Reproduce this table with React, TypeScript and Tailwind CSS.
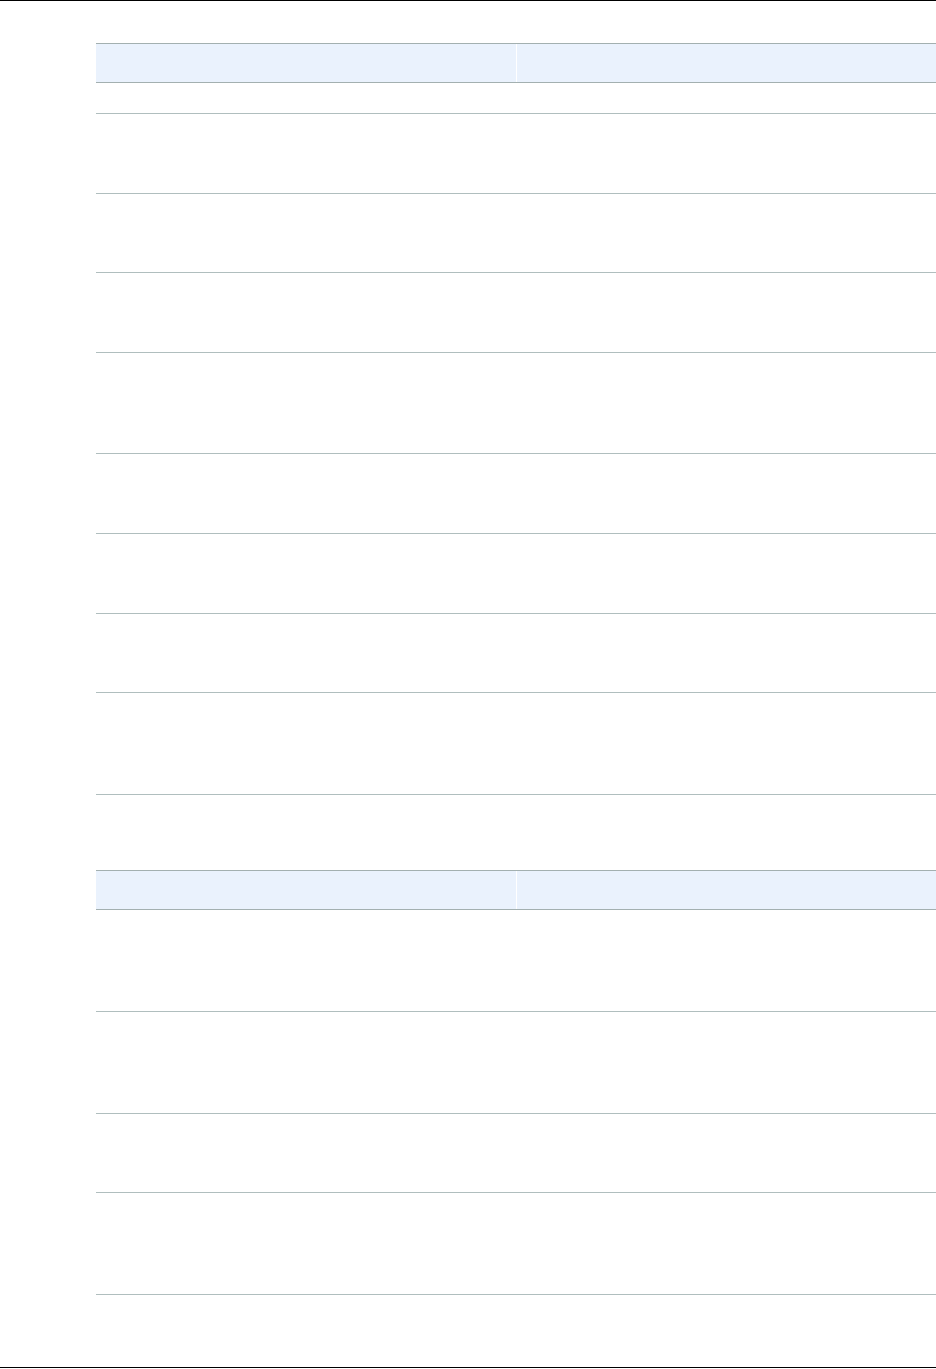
export default function App() {
  const first = [31, 80, 79, 80, 101, 80, 80, 79, 102];
  const second = [102, 102, 79, 102];

  const Header = () => (
    <div className="flex h-[40px] border-y border-[#a3b0b0] bg-[#eaf2fd]">
      <div className="w-[420px]" />
      <div className="flex-1 border-l border-white" />
    </div>
  );

  return (
    <div className="h-[1368px] w-[936px] border-y border-black bg-white font-['Liberation_Sans',sans-serif]">
      <div className="ml-[96px] mt-[42px]">
        {/* Table 1 */}
        <Header />
        {first.map((h, i) => (
          <div key={i} className="flex border-b border-[#b0bebe]" style={{ height: h }}>
            <div className="w-[420px]" />
            <div className="flex-1" />
          </div>
        ))}

        {/* Table 2 */}
        <div className="mt-[75px]">
          <Header />
          {second.map((h, i) => (
            <div key={i} className="flex border-b border-[#b0bebe]" style={{ height: h }}>
              <div className="w-[420px]" />
              <div className="flex-1" />
            </div>
          ))}
        </div>
      </div>
    </div>
  );
}
